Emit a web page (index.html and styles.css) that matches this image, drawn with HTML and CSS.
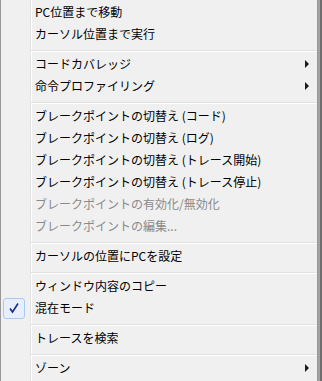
FILE: index.html
```html
<!DOCTYPE html>
<html lang="ja">
  <head>
    <meta charset="UTF-8" />
    <title>コンテキストメニュー</title>
    <link rel="stylesheet" href="styles.css">
  </head>
  <body>
    <div class="menu">
      <div class="item"><span class="icon"></span><span class="label">PC位置まで移動</span></div>
      <div class="item"><span class="icon"></span><span class="label">カーソル位置まで実行</span></div>
      <div class="sep"></div>
      <div class="item"><span class="icon"></span><span class="label">コードカバレッジ</span><span class="arrow"></span></div>
      <div class="item"><span class="icon"></span><span class="label">命令プロファイリング</span><span class="arrow"></span></div>
      <div class="sep"></div>
      <div class="item"><span class="icon"></span><span class="label">ブレークポイントの切替え (コード)</span></div>
      <div class="item"><span class="icon"></span><span class="label">ブレークポイントの切替え (ログ)</span></div>
      <div class="item"><span class="icon"></span><span class="label">ブレークポイントの切替え (トレース開始)</span></div>
      <div class="item"><span class="icon"></span><span class="label">ブレークポイントの切替え (トレース停止)</span></div>
      <div class="item disabled"><span class="icon"></span><span class="label">ブレークポイントの有効化/無効化</span></div>
      <div class="item disabled"><span class="icon"></span><span class="label">ブレークポイントの編集...</span></div>
      <div class="sep"></div>
      <div class="item"><span class="icon"></span><span class="label">カーソルの位置にPCを設定</span></div>
      <div class="sep"></div>
      <div class="item"><span class="icon"></span><span class="label">ウィンドウ内容のコピー</span></div>
      <div class="item">
        <span class="icon checked">
          <svg width="12" height="12" viewBox="0 0 12 12">
            <path d="M2 6.5 L4.5 10 L10 1.5" fill="none" stroke="#1a2a8c" stroke-width="1.6" />
          </svg>
        </span>
        <span class="label">混在モード</span>
      </div>
      <div class="sep"></div>
      <div class="item"><span class="icon"></span><span class="label">トレースを検索</span></div>
      <div class="sep"></div>
      <div class="item"><span class="icon"></span><span class="label">ゾーン</span><span class="arrow"></span></div>
    </div>
    <div class="edge"></div>
  </body>
</html>
```

FILE: styles.css
```css
html,
body {
  margin: 0;
  height: 100%;
}
body {
  display: flex;
  background: #f0f0f0;
  font-family: "Noto Sans CJK JP", "Noto Sans", sans-serif;
  font-size: 12px;
  color: #000;
  overflow: hidden;
}
.menu {
  width: 318px;
  box-sizing: border-box;
  padding-top: 1px;
  border-left: 1px solid #979797;
  border-right: 1px solid #979797;
  background: linear-gradient(
    to right,
    #f0f0f0 29px,
    #e2e3e3 29px 30px,
    #ffffff 30px 31px,
    #f0f0f0 31px
  );
}
.item {
  display: flex;
  align-items: center;
  height: 22px;
  padding-left: 2px;
  padding-right: 8px;
}
.icon {
  width: 22px;
  height: 21px;
  margin-right: 10px;
  box-sizing: border-box;
  flex: none;
}
.icon.checked {
  display: flex;
  align-items: center;
  justify-content: center;
  border: 1px solid #a9c9f2;
  border-radius: 3px;
  background: #e6effb;
}
.label {
  flex: 1;
  line-height: 22px;
  white-space: nowrap;
}
.disabled .label {
  color: #8a8a8a;
}
.arrow {
  width: 0;
  height: 0;
  border-left: 4px solid #1a1a1a;
  border-top: 4px solid transparent;
  border-bottom: 4px solid transparent;
}
.sep {
  height: 2px;
  margin: 5px 1px 1px 30px;
  border-top: 1px solid #e0e0e0;
  border-bottom: 1px solid #ffffff;
  box-sizing: border-box;
}
.edge {
  flex: 1;
  background: #a3a3a3;
  border-right: 2px solid #6e6e6e;
}
```
